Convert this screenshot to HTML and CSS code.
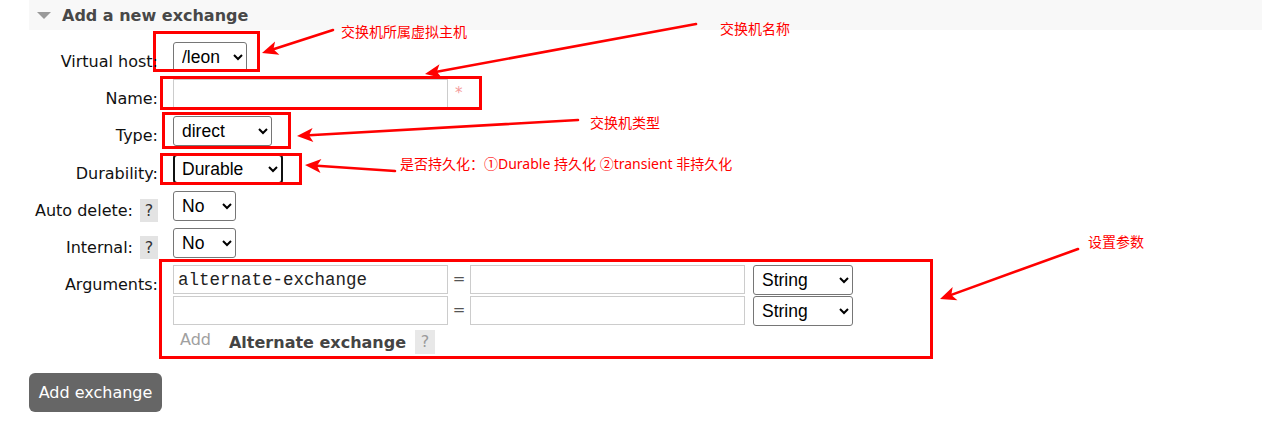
FILE: index.html
```html
<!DOCTYPE html>
<html lang="en">
<head>
<meta charset="utf-8">
<title>Add a new exchange</title>
<link rel="stylesheet" href="styles.css">
</head>
<body>
<div class="page">
  <div class="section-head">
    <span class="tri"></span>
    <h2 class="title">Add a new exchange</h2>
  </div>

  <form class="form">
    <div class="lbl"><span class="lbl-text">Virtual host:</span></div>
    <div class="fld">
      <select class="sel w-vhost"><option>/leon</option></select>
    </div>

    <div class="lbl"><span class="lbl-text">Name:</span></div>
    <div class="fld">
      <input class="txt w-wide" type="text">
      <span class="req">*</span>
    </div>

    <div class="lbl"><span class="lbl-text">Type:</span></div>
    <div class="fld">
      <select class="sel w-type"><option>direct</option></select>
    </div>

    <div class="lbl"><span class="lbl-text">Durability:</span></div>
    <div class="fld">
      <select class="sel w-dur focused"><option>Durable</option></select>
    </div>

    <div class="lbl"><span class="lbl-text">Auto delete:</span><span class="help">?</span></div>
    <div class="fld">
      <select class="sel w-no"><option>No</option></select>
    </div>

    <div class="lbl"><span class="lbl-text">Internal:</span><span class="help">?</span></div>
    <div class="fld">
      <select class="sel w-no"><option>No</option></select>
    </div>

    <div class="lbl"><span class="lbl-text">Arguments:</span></div>
    <div class="args">
      <div class="arg-row">
        <input class="txt w-wide mono" type="text" value="alternate-exchange">
        <span class="eq">=</span>
        <input class="txt w-wide" type="text">
        <select class="sel w-str"><option>String</option></select>
      </div>
      <div class="arg-row">
        <input class="txt w-wide mono" type="text">
        <span class="eq">=</span>
        <input class="txt w-wide" type="text">
        <select class="sel w-str"><option>String</option></select>
      </div>
      <div class="arg-foot">
        <span class="add">Add</span>
        <span class="alt">Alternate exchange</span>
        <span class="help help-light">?</span>
      </div>
    </div>
  </form>

  <button class="btn" type="button">Add exchange</button>

  <!-- annotations -->
  <div class="mark m1"></div>
  <div class="mark m2"></div>
  <div class="mark m3"></div>
  <div class="mark m4"></div>
  <div class="mark m5"></div>

  <svg class="arrows" width="1262" height="435" viewBox="0 0 1262 435">
    <g stroke="#ff0000" stroke-width="2.6" stroke-linecap="round" fill="none">
      <line x1="333" y1="30" x2="273.4" y2="49.3"/>
      <line x1="696" y1="24" x2="436.8" y2="71.8"/>
      <line x1="578" y1="120" x2="309" y2="135.3"/>
      <line x1="395" y1="171" x2="317" y2="165.8"/>
      <line x1="1078" y1="249" x2="951.3" y2="294.9"/>
    </g>
    <g fill="#ff0000">
      <path transform="translate(262,53) rotate(162.1)" d="M0,0 L-16,-7 L-12,0 L-16,7 Z"/>
      <path transform="translate(425,74) rotate(169.55)" d="M0,0 L-16,-7 L-12,0 L-16,7 Z"/>
      <path transform="translate(297,136) rotate(176.74)" d="M0,0 L-16,-7 L-12,0 L-16,7 Z"/>
      <path transform="translate(305,165) rotate(183.81)" d="M0,0 L-16,-7 L-12,0 L-16,7 Z"/>
      <path transform="translate(940,299) rotate(160.08)" d="M0,0 L-16,-7 L-12,0 L-16,7 Z"/>
    </g>
  </svg>

  <span class="note n1">交换机所属虚拟主机</span>
  <span class="note n2">交换机名称</span>
  <span class="note n3">交换机类型</span>
  <span class="note n4">是否持久化：①Durable 持久化 ②transient 非持久化</span>
  <span class="note n5">设置参数</span>
</div>
</body>
</html>
```

FILE: styles.css
```css
html, body {
  margin: 0;
  padding: 0;
  background: #ffffff;
}

.page {
  position: relative;
  width: 1262px;
  height: 435px;
  overflow: hidden;
  font-family: "DejaVu Sans", Verdana, sans-serif;
  font-size: 16px;
  color: #111;
}

/* heading bar */
.section-head {
  margin-left: 29px;
  height: 30px;
  background: #f8f8f8;
  display: flex;
  align-items: center;
}
.tri {
  width: 0;
  height: 0;
  margin-left: 8px;
  border-left: 7px solid transparent;
  border-right: 7px solid transparent;
  border-top: 7px solid #9a9a9a;
}
.title {
  margin: 0 0 0 11px;
  padding-top: 1px;
  font-size: 16px;
  font-weight: bold;
  color: #484848;
  line-height: 30px;
}

/* form grid */
.form {
  display: grid;
  grid-template-columns: 158px 1fr;
  column-gap: 15px;
  row-gap: 7.2px;
  margin-top: 12px;
}
.lbl {
  display: flex;
  justify-content: flex-end;
  align-items: flex-start;
  white-space: nowrap;
  height: 30px;
}
.lbl-text {
  position: relative;
  z-index: 2;
  padding-top: 10px;
  line-height: 19px;
}
.help {
  display: inline-block;
  width: 18px;
  height: 23px;
  line-height: 23px;
  margin-top: 8px;
  margin-left: 7px;
  text-align: center;
  background: #e3e3e3;
  color: #333;
  font-size: 16px;
}
.help-light {
  width: 20px;
  height: 24px;
  line-height: 24px;
  margin-top: 3px;
  margin-left: 9px;
  background: #e8e8e8;
  color: #9a9a9a;
}

.fld {
  display: flex;
  align-items: flex-start;
  height: 30px;
}

/* controls */
.sel {
  height: 30px;
  margin: 0;
  padding: 0 4px;
  font-family: "Liberation Sans", Arial, sans-serif;
  font-size: 17.5px;
  color: #000;
  background-color: #fff;
  border: 1px solid #767676;
  border-radius: 3px;
  box-sizing: border-box;
}
.sel.focused {
  border: 2px solid #101010;
  border-radius: 4px;
  padding-left: 3px;
}
.w-vhost { width: 74px; }
.w-type { width: 99px; }
.w-dur { width: 110px; }
.w-no { width: 63px; }
.w-str { width: 100px; }

.txt {
  height: 29px;
  margin: 0;
  padding: 0 4px;
  border: 1px solid #cccccc;
  border-radius: 0;
  box-sizing: border-box;
  background: #fff;
  font-family: "DejaVu Sans", sans-serif;
  font-size: 16px;
}
.w-wide { width: 275px; }
.mono {
  font-family: "Liberation Mono", "Courier New", monospace;
  font-size: 17.5px;
  color: #222;
}
.req {
  margin-left: 7px;
  padding-top: 5px;
  font-size: 15px;
  line-height: 19px;
  color: #f59a9a;
}

/* arguments */
.args {
  display: flex;
  flex-direction: column;
  gap: 1px;
}
.arg-row {
  display: flex;
  align-items: flex-start;
  height: 30px;
}
.eq {
  width: 22px;
  text-align: center;
  line-height: 29px;
  color: #555;
  font-size: 15px;
}
.arg-row .sel {
  margin-left: 8px;
}
.arg-foot {
  display: flex;
  align-items: flex-start;
  height: 28px;
}
.add {
  margin-left: 7px;
  padding-top: 3px;
  line-height: 19px;
  color: #a0a0a0;
}
.alt {
  margin-left: 18px;
  padding-top: 6px;
  line-height: 19px;
  font-weight: bold;
  color: #444;
}

/* button */
.btn {
  display: block;
  margin: 18px 0 0 29px;
  height: 39px;
  width: 133px;
  padding: 0;
  border: none;
  border-radius: 6px;
  background: #666666;
  color: #fff;
  font-family: "DejaVu Sans", Verdana, sans-serif;
  font-size: 16px;
}

/* annotations (overlay) */
.mark {
  position: absolute;
  box-sizing: border-box;
  border: 3px solid #ff0000;
  pointer-events: none;
}
.m1 { left: 153px; top: 31px; width: 107px; height: 41px; }
.m2 { left: 160px; top: 76px; width: 322px; height: 34px; }
.m3 { left: 162px; top: 112px; width: 129px; height: 37px; }
.m4 { left: 160px; top: 153px; width: 142px; height: 32px; }
.m5 { left: 159px; top: 259px; width: 774px; height: 100px; }

.arrows {
  position: absolute;
  left: 0;
  top: 0;
  pointer-events: none;
}

.note {
  position: absolute;
  font-family: "Noto Sans", "Noto Sans CJK SC", sans-serif;
  font-size: 14px;
  line-height: 14px;
  color: #ff0000;
  white-space: nowrap;
}
.n1 { left: 341px; top: 25px; }
.n2 { left: 720px; top: 22px; }
.n3 { left: 590px; top: 116px; }
.n4 { left: 400px; top: 157px; }
.n5 { left: 1088px; top: 235px; }
```
